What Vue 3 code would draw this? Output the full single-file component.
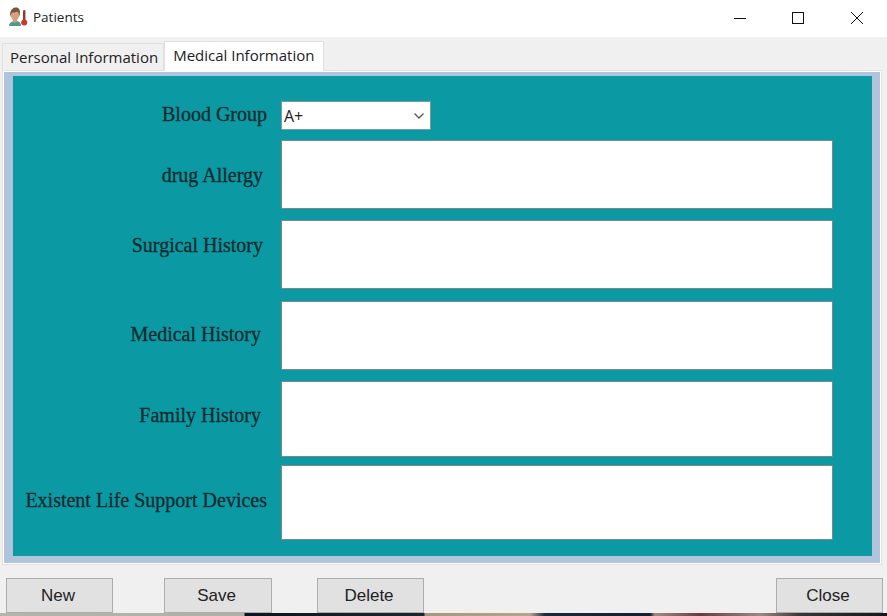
<script setup>
const rows = [
  { label: 'Blood Group', height: 29, track: 39, top: 3, right: 0, select: true },
  { label: 'drug Allergy', height: 69, track: 80, top: 25, right: 4 },
  { label: 'Surgical History', height: 69, track: 81, top: 15, right: 4 },
  { label: 'Medical History', height: 69, track: 80, top: 23, right: 6 },
  { label: 'Family History', height: 76, track: 84, top: 24, right: 6 },
  { label: 'Existent Life Support Devices', height: 75, track: 75, top: 25, right: 0 },
]
const gridRows = rows.map((r) => r.track + 'px').join(' ')
</script>

<template>
  <div class="window">
    <header class="titlebar">
      <svg class="app-icon" width="20" height="20" viewBox="0 0 20 20">
        <path d="M1 19c0-3 2-4 5-5h3c3 1 4 2 4 5z" fill="#4f9a8c" />
        <path d="M5 12h4v3c-1 1-3 1-4 0z" fill="#c99a7c" />
        <ellipse cx="7" cy="8" rx="4.2" ry="5.5" fill="#d0a284" />
        <path d="M2.5 10C1 3 5 .5 8 .5s5 2.500 3.500 9c-.5-2.500-1-4-2-5C7.500 5.500 5 5.500 4 5.500 3.200 6.500 3 8 2.500 10z" fill="#7a5238" />
        <rect x="15" y="3" width="2.4" height="11" rx="1.2" fill="#8c3a30" />
        <circle cx="16.2" cy="15.5" r="3" fill="#c9372c" />
      </svg>
      <span class="title">Patients</span>
      <div class="controls">
        <svg width="14" height="14" viewBox="0 0 14 14"><path d="M1 7.500h12" stroke="#111" fill="none" /></svg>
        <svg width="14" height="14" viewBox="0 0 14 14"><rect x="1.500" y="1.500" width="11" height="11" stroke="#111" fill="none" /></svg>
        <svg class="close-icon" width="14" height="14" viewBox="0 0 14 14"><path d="M1 1l12 12M13 1L1 13" stroke="#111" fill="none" /></svg>
      </div>
    </header>

    <main class="client">
      <nav class="tabs">
        <div class="tab">Personal Information</div>
        <div class="tab active">Medical Information</div>
      </nav>
      <section class="page">
        <div class="blue">
          <div class="teal" :style="{ gridTemplateRows: gridRows }">
            <template v-for="r in rows" :key="r.label">
              <label class="field-label" :style="{ paddingTop: r.top + 'px', paddingRight: r.right + 'px' }">{{ r.label }}</label>
              <div v-if="r.select" class="select">
                <span>A+</span>
                <svg width="12" height="8" viewBox="0 0 12 8"><path d="M1.500 1.500L6 6l4.500-4.500" stroke="#555" stroke-width="1.300" fill="none" /></svg>
              </div>
              <div v-else class="textarea" :style="{ height: r.height + 'px' }"></div>
            </template>
          </div>
        </div>
      </section>
      <footer class="actions">
        <div class="left">
          <button>New</button>
          <button class="save">Save</button>
          <button>Delete</button>
        </div>
        <button>Close</button>
      </footer>
    </main>
    <div class="desktop"></div>
  </div>
</template>

<style>
html, body { margin: 0; padding: 0; background: #f0f0f0; overflow: hidden; }
</style>

<style scoped>
.window {
  width: 887px;
  height: 616px;
  display: flex;
  flex-direction: column;
  background: #f0f0f0;
  font-family: "Open Sans", "Liberation Sans", sans-serif;
  overflow: hidden;
}
.titlebar {
  height: 37px;
  flex: none;
  background: #fff;
  display: flex;
  align-items: center;
  padding-left: 8px;
  box-sizing: border-box;
}
.app-icon { margin-right: 5px; margin-top: -3px; }
.title { font-size: 13.5px; color: #222; margin-top: -3px; }
.controls {
  margin-left: auto;
  display: flex;
  gap: 44px;
  padding-right: 23px;
  margin-top: -1px;
}
.close-icon { margin-left: 1px; }
.client { flex: 1; display: flex; flex-direction: column; min-height: 0; }
.tabs { flex: none; display: flex; align-items: flex-end; height: 33px; padding-left: 2px; box-sizing: border-box; }
.tab {
  height: 27px;
  padding: 0 5px 0 7px;
  display: flex;
  align-items: center;
  font-size: 15px;
  color: #222;
  background: #f0f0f0;
  border: 1px solid #e0e0e0;
  border-bottom: none;
  box-sizing: border-box;
}
.tab.active {
  height: 30px;
  background: #fff;
  padding: 0 9px 4px 8px;
  margin-bottom: -1px;
  position: relative;
}
.page {
  margin: 0 5px 0 2px;
  height: 495px;
  flex: none;
  background: #fff;
  border: 1px solid #e2e2e2;
  box-sizing: border-box;
  padding: 1px;
}
.blue {
  height: 100%;
  background: #b0c4de;
  padding: 4px 8px 7px 9px;
  box-sizing: border-box;
}
.teal {
  height: 100%;
  background: #0b9aa3;
  box-sizing: border-box;
  padding-top: 25px;
  display: grid;
  grid-template-columns: 254px 552px;
  column-gap: 14px;
  align-content: start;
}
.field-label {
  font-family: "Liberation Serif", serif;
  font-size: 20px;
  line-height: 20px;
  color: #0c2a2e;
  text-align: right;
  white-space: nowrap;
  -webkit-text-stroke: 0.3px #0c2a2e;
}
.select {
  width: 150px;
  height: 29px;
  background: #fff;
  border: 1px solid #7a9a9c;
  box-sizing: border-box;
  display: flex;
  align-items: center;
  justify-content: space-between;
  padding: 0 5px 0 2px;
  font-size: 16px;
  color: #222;
}
.textarea {
  background: #fff;
  border: 1px solid #7a8a8c;
  box-sizing: border-box;
}
.actions {
  flex: none;
  display: flex;
  justify-content: space-between;
  padding: 13px 4px 0 6px;
}
.left { display: flex; gap: 45px; }
.left .save { margin-left: 6px; width: 108px; }
button {
  width: 107px;
  height: 35px;
  background: #e1e1e1;
  border: 1px solid #adadad;
  font-family: "Liberation Sans", sans-serif;
  font-size: 17px;
  color: #222;
  padding: 0 3px 0 0;
}
.desktop {
  height: 3px;
  flex: none;
  background: linear-gradient(90deg, #b4b4ac 0, #b0b0a8 244px, #0c1420 245px, #1c2630 424px, #a8957e 425px, #b8a48c 530px, #1a2a3a 545px, #152030 650px, #a88a80 655px, #6a3a40 700px, #a08880 760px, #3a3438 800px, #16161c 887px);
}
</style>
